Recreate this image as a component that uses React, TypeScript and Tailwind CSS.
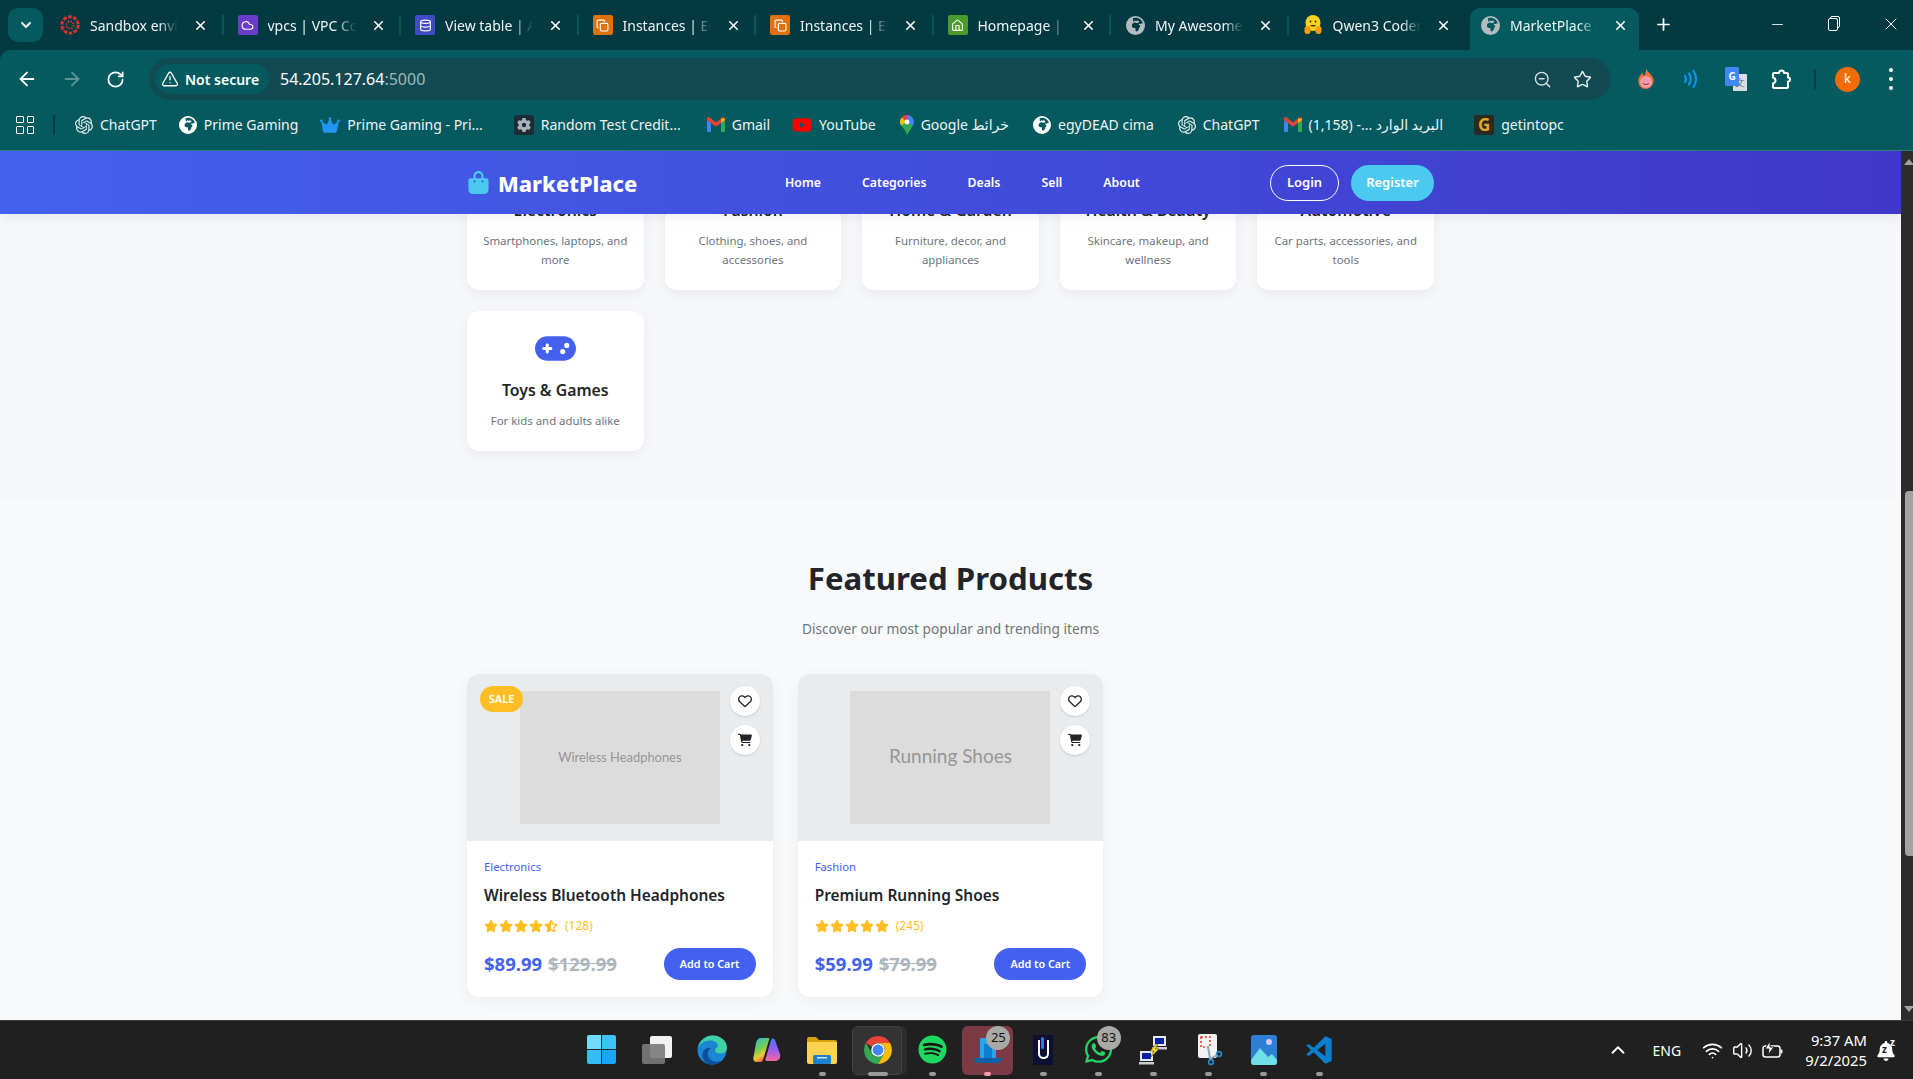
import React from 'react';
import { ArrowLeft, ArrowRight, RotateCw, TriangleAlert, ZoomOut, Star, X, Plus, Minus, ChevronDown, ChevronUp, Cloud, Database, Copy, Wifi, Volume2, Home } from 'lucide-react';
import { FaBagShopping, FaBell, FaCartShopping, FaCrown, FaEarthAfrica, FaGamepad, FaGear, FaHeartPulse, FaCar, FaLaptop, FaRegHeart, FaShirt, FaSpotify, FaStar, FaStarHalfStroke, FaWhatsapp, FaCouch, FaYoutube } from 'react-icons/fa6';
import { SiOpenai } from 'react-icons/si';

const tile = 'w-5 h-5 rounded-[2px] flex items-center justify-center shrink-0';

const SandboxIcon = () => (
  <svg width="20" height="20" viewBox="0 0 20 20" className="shrink-0">
    <circle cx="10" cy="10" r="8.2" fill="none" stroke="#d9352b" strokeWidth="3" strokeDasharray="3.6 1.6" />
    <circle cx="10" cy="10" r="3.6" fill="none" stroke="#d9352b" strokeWidth="1.6" strokeDasharray="1.6 1.2" />
  </svg>
);

const HuggingIcon = () => (
  <svg width="20" height="22" viewBox="0 0 20 22" className="shrink-0">
    <ellipse cx="10" cy="9" rx="7.5" ry="8" fill="#ffd21e" />
    <rect x="1.5" y="12" width="6" height="8" rx="3" fill="#ff9d0b" />
    <rect x="12.5" y="12" width="6" height="8" rx="3" fill="#ff9d0b" />
    <circle cx="7.5" cy="7.5" r="1" fill="#32343d" />
    <circle cx="12.5" cy="7.5" r="1" fill="#32343d" />
    <path d="M7 11c1.5 2 4.5 2 6 0" fill="#32343d" />
  </svg>
);

const GlobeGrey = () => <FaEarthAfrica size={19} className="text-[#b4bcc0] shrink-0 ml-px" />;

const tabs: { title: string; icon: React.ReactNode; active?: boolean }[] = [
  { title: 'Sandbox environment', icon: <SandboxIcon /> },
  { title: 'vpcs | VPC Console', icon: <div className={`${tile} bg-[#6a3cc9]`}><Cloud size={13} className="text-white" /></div> },
  { title: 'View table | Aurora', icon: <div className={`${tile} bg-[#3f4bc9]`}><Database size={13} className="text-white" /></div> },
  { title: 'Instances | EC2', icon: <div className={`${tile} bg-[#e0710f]`}><Copy size={13} className="text-white" /></div> },
  { title: 'Instances | EC2', icon: <div className={`${tile} bg-[#e0710f]`}><Copy size={13} className="text-white" /></div> },
  { title: 'Homepage | Supabase', icon: <div className={`${tile} bg-[#4b9a2c]`}><Home size={13} className="text-white" /></div> },
  { title: 'My Awesome App', icon: <GlobeGrey /> },
  { title: 'Qwen3 Coder Next', icon: <HuggingIcon /> },
  { title: 'MarketPlace - Home', icon: <GlobeGrey />, active: true },
];

const GmailIcon = () => (
  <svg width="18" height="15" viewBox="0 0 18 15" className="shrink-0">
    <path d="M0 3v10.5A1.5 1.5 0 0 0 1.5 15H4V6z" fill="#4285f4" />
    <path d="M14 6v9h2.5A1.5 1.5 0 0 0 18 13.5V3z" fill="#34a853" />
    <path d="M0 1.8C0 .4 1.6-.4 2.7.5L9 5.5 15.3.5C16.4-.4 18 .4 18 1.8V3l-4 3-5 3.7L4 6 0 3z" fill="#ea4335" />
    <path d="M14 1.5 18 1.8V3l-4 3z" fill="#fbbc04" />
  </svg>
);

const MapsIcon = () => (
  <svg width="14" height="20" viewBox="0 0 14 20" className="shrink-0">
    <path d="M7 0a7 7 0 0 1 7 7c0 1.5-.5 2.7-1.3 3.8L7 8z" fill="#4285f4" />
    <path d="M7 0a7 7 0 0 0-5.3 2.4L7 7z" fill="#ea4335" />
    <path d="M1.7 2.4A7 7 0 0 0 1.3 10.8L7 7z" fill="#fbbc04" />
    <path d="M1.3 10.8C3 13.2 5.8 15.5 7 20l5.7-9.2L7 7z" fill="#34a853" />
    <circle cx="7" cy="7" r="2.4" fill="#fff" />
  </svg>
);

const bookmarks: { label: string; icon: React.ReactNode; rtl?: boolean; ml: string }[] = [
  { label: 'ChatGPT', icon: <SiOpenai size={18} className="text-[#e6eeee]" />, ml: 'ml-0' },
  { label: 'Prime Gaming', icon: <FaEarthAfrica size={18} className="text-white" />, ml: 'ml-[22px]' },
  { label: 'Prime Gaming - Pri...', icon: <FaCrown size={20} className="text-[#2196f3]" />, ml: 'ml-[22px]' },
  { label: 'Random Test Credit...', icon: <div className="w-5 h-5 rounded-[3px] bg-[#1d2b36] flex items-center justify-center"><FaGear size={14} className="text-[#aab4bb]" /></div>, ml: 'ml-[31px]' },
  { label: 'Gmail', icon: <GmailIcon />, ml: 'ml-[26px]' },
  { label: 'YouTube', icon: <div className="w-5 h-[18px] flex items-center justify-center"><FaYoutube size={20} className="text-[#f00]" /></div>, ml: 'ml-[22px]' },
  { label: 'خرائط Google', icon: <MapsIcon />, rtl: true, ml: 'ml-[24px]' },
  { label: 'egyDEAD cima', icon: <FaEarthAfrica size={18} className="text-white" />, ml: 'ml-[24px]' },
  { label: 'ChatGPT', icon: <SiOpenai size={18} className="text-[#e6eeee]" />, ml: 'ml-[24px]' },
  { label: 'البريد الوارد ...- (1,158)', icon: <GmailIcon />, rtl: true, ml: 'ml-[24px]' },
  { label: 'getintopc', icon: <div className="w-5 h-5 rounded-[2px] bg-[#2a2a22] flex items-center justify-center text-[#e3a81c] text-[17px] font-bold leading-none">G</div>, ml: 'ml-[31px]' },
];

const categories = [
  { title: 'Electronics', desc: 'Smartphones, laptops, and more', icon: <FaLaptop size={36} /> },
  { title: 'Fashion', desc: 'Clothing, shoes, and accessories', icon: <FaShirt size={36} /> },
  { title: 'Home & Garden', desc: 'Furniture, decor, and appliances', icon: <FaCouch size={36} /> },
  { title: 'Health & Beauty', desc: 'Skincare, makeup, and wellness', icon: <FaHeartPulse size={36} /> },
  { title: 'Automotive', desc: 'Car parts, accessories, and tools', icon: <FaCar size={36} /> },
  { title: 'Toys & Games', desc: 'For kids and adults alike', icon: <FaGamepad size={41} /> },
];

const products = [
  { cat: 'Electronics', name: 'Wireless Bluetooth Headphones', price: '$89.99', old: '$129.99', count: '(128)', half: true, sale: true, ph: 'Wireless Headphones', phClass: 'text-[12.9px]' },
  { cat: 'Fashion', name: 'Premium Running Shoes', price: '$59.99', old: '$79.99', count: '(245)', half: false, sale: false, ph: 'Running Shoes', phClass: 'text-[19px] pb-[3px]' },
];

function BrowserChrome() {
  return (
    <div className="bg-[#033a42] text-white shrink-0">
      {/* tab strip */}
      <div className="h-[50px] flex items-start relative">
        <div className="w-[35px] h-[34px] mt-2 ml-2 rounded-[10px] bg-[#055a60] flex items-center justify-center shrink-0">
          <ChevronDown size={16} strokeWidth={3} />
        </div>
        <div className="flex ml-[3px] h-full">
          {tabs.map((t, i) => (
            <div key={i} className={t.active
              ? 'w-[169px] ml-[4px] mt-[8px] h-[42px] pb-[8px] bg-[#045a5f] rounded-t-[10px] flex items-center pl-[10px] relative shrink-0'
              : 'w-[177.5px] h-full flex items-center pl-[14px] relative shrink-0'}>
              {t.icon}
              <div className="ml-[10px] w-[88px] overflow-hidden whitespace-nowrap text-[14px] text-[#eef4f4] [mask-image:linear-gradient(to_right,black_78%,transparent)]">{t.title}</div>
              <X size={15} strokeWidth={2.5} className="ml-[15px] text-white" />
              {!t.active && i < 7 && <div className="absolute right-0 top-[15px] h-[20px] w-[2px] bg-[#07555c]" />}
            </div>
          ))}
          <Plus size={19} strokeWidth={2.2} className="ml-[15px] mt-[15px]" />
        </div>
        <Minus size={17} strokeWidth={1.2} className="absolute left-[1769px] top-[16px]" />
        <div className="absolute left-[1830px] top-[16px] w-[10px] h-[12px] border border-white rounded-[2px]" />
        <div className="absolute left-[1828px] top-[18px] w-[10px] h-[13px] border border-white bg-[#033a42] rounded-[2px]" />
        <X size={20} strokeWidth={1.2} className="absolute left-[1881px] top-[14px]" />
      </div>
      {/* toolbar */}
      <div className="h-[50px] bg-[#045a5f] rounded-tl-[10px] flex items-start">
        <div className="flex items-center h-[42px] mt-[8px] pl-[16px] gap-[23px]">
          <ArrowLeft size={22} strokeWidth={2} />
          <ArrowRight size={22} strokeWidth={2} className="text-[#5e9497]" />
          <RotateCw size={19} strokeWidth={2.2} />
        </div>
        <div className="ml-[24px] mt-[8px] w-[1462px] h-[42px] rounded-full bg-[#114a52] flex items-center pl-[6px] pr-[19px]">
          <div className="h-[30px] w-[114px] rounded-full bg-[#045a5f] flex items-center pl-[6px] gap-[6px] text-[14px] font-semibold whitespace-nowrap">
            <TriangleAlert size={18} strokeWidth={1.8} />
            Not secure
          </div>
          <span className="ml-[11px] text-[16px]">54.205.127.64<span className="text-[#9fb8ba]">:5000</span></span>
          <ZoomOut size={19} strokeWidth={1.8} className="ml-auto text-[#d5e0e0]" />
          <Star size={19} strokeWidth={1.8} className="ml-[21px] text-[#e6eeee]" />
        </div>
        <div className="flex items-center h-[42px] mt-[8px] ml-[25px]">
          <svg width="20" height="26" viewBox="0 0 20 24">
            <path d="M10 1c1 4 6 6 7.5 11 1 4-2.5 10-7.5 10S1.5 18 2.5 12C3 9.5 5 8 5.5 6 7 7 7.5 8 8 9c1.500-2 2.500-5 2-8z" fill="#f2703a" />
            <circle cx="10" cy="15" r="6" fill="#f59ca8" />
            <path d="M7 16c1.5 2 4.5 2 6 0" stroke="#7a2a2a" strokeWidth="1" fill="none" />
          </svg>
          <svg width="20" height="24" viewBox="0 0 20 24" fill="none" stroke="#0a94f0" strokeWidth="2.2" strokeLinecap="round" className="ml-[24px]">
            <path d="M5 9c1.2 2 1.2 4 0 6" />
            <path d="M9 6.5c2.2 3.4 2.2 7.6 0 11" />
            <path d="M13.5 4c3.2 5 3.2 11 0 16" />
          </svg>
          <div className="relative w-[22px] h-[24px] ml-[25px]">
            <div className="absolute right-0 bottom-0 w-[14px] h-[17px] bg-[#d9dfe0] rounded-[1px] text-[#666] text-[10px] text-center leading-[17px]">文</div>
            <div className="absolute left-0 top-0 w-[14px] h-[19px] bg-[#4285f4] rounded-[1px] text-white text-[10px] font-bold text-center leading-[18px]">G</div>
          </div>
          <svg width="22" height="24" viewBox="0 0 22 24" fill="none" stroke="#fff" strokeWidth="2" strokeLinejoin="round" className="ml-[23px]">
            <path d="M4 6h5a2.5 2.5 0 0 1 5 0h3a1 1 0 0 1 1 1v3.5a2 2 0 1 1 0 4V20a1 1 0 0 1-1 1H4a1 1 0 0 1-1-1v-3.500c2-.5 2.500-2 2.500-3s-.5-2.500-2.500-3V7a1 1 0 0 1 1-1z" />
          </svg>
          <div className="w-[2px] h-[20px] bg-[#043f47] ml-[22px]" />
          <div className="w-[25px] h-[25px] rounded-full bg-[#f26c06] ml-[19px] flex items-center justify-center text-[13px]">k</div>
          <div className="ml-[29px] flex flex-col gap-[5px]">
            <div className="w-[4px] h-[4px] rounded-full bg-white" />
            <div className="w-[4px] h-[4px] rounded-full bg-white" />
            <div className="w-[4px] h-[4px] rounded-full bg-white" />
          </div>
        </div>
      </div>
      {/* bookmarks */}
      <div className="h-[51px] bg-[#045a5f] flex items-center pl-[16px] pb-[1px] border-b border-[#2c7f7c]">
        <div className="grid grid-cols-2 gap-[3px] w-[18px] shrink-0">
          {[0, 1, 2, 3].map(n => <div key={n} className="h-[7.5px] border-[1.5px] border-white rounded-[1px]" />)}
        </div>
        <div className="w-[2px] h-[20px] bg-[#043f47] ml-[19px] mr-[20px]" />
        <div className="flex items-center text-[14px] text-[#eef4f4] whitespace-nowrap">
          {bookmarks.map((b, i) => (
            <div key={i} className={`flex items-center gap-[7px] ${b.ml}`}>
              {b.icon}
              <span dir={b.rtl ? 'rtl' : undefined}>{b.label}</span>
            </div>
          ))}
        </div>
      </div>
    </div>
  );
}

function Navbar() {
  return (
    <div className="absolute top-0 left-0 right-0 h-[63px] z-10 bg-gradient-to-r from-[#4361ee] to-[#3f37c9] shadow-[0_4px_12px_rgba(0,0,0,0.06)]">
      <div className="w-[967px] mx-auto h-full flex items-center relative">
        <div className="flex items-center gap-[8px] w-[318px]">
          <FaBagShopping size={23} className="text-[#4cc9f0]" />
          <span className="text-[21.8px] font-extrabold text-white mt-[3px]">MarketPlace</span>
        </div>
        <div className="flex items-center gap-[41px] text-[12.3px] font-semibold text-white mt-[1px]">
          <span>Home</span>
          <span>Categories</span>
          <span>Deals</span>
          <span>Sell</span>
          <span>About</span>
        </div>
        <div className="ml-auto flex items-center gap-3 text-[13px] font-semibold text-white">
          <div className="h-[36px] w-[69px] rounded-full border border-white flex items-center justify-center">Login</div>
          <div className="h-[36px] w-[83px] rounded-full bg-[#4cc9f0] flex items-center justify-center">Register</div>
        </div>
      </div>
    </div>
  );
}

function CategoryCard({ title, desc, icon }: { title: string; desc: string; icon: React.ReactNode }) {
  return (
    <div className="bg-white rounded-[12px] shadow-[0_4px_12px_rgba(0,0,0,0.05)] px-[12px] pt-[24px] pb-[21px] flex flex-col items-center text-center">
      <div className="h-[26px] flex items-center justify-center text-[#4361ee]">{icon}</div>
      <div className="mt-[17px] text-[15.8px] leading-[24px] font-semibold text-[#212529]">{title}</div>
      <div className="mt-[9px] text-[11.4px] leading-[19px] text-[#6c757d]">{desc}</div>
    </div>
  );
}

function ProductCard({ p }: { p: (typeof products)[number] }) {
  return (
    <div className="bg-white rounded-[12px] overflow-hidden shadow-[0_4px_16px_rgba(0,0,0,0.05)]">
      <div className="h-[167px] bg-[#e9ecef] relative flex items-center justify-center">
        <div className={`w-[200px] h-[133px] bg-[#dcdcdc] flex items-center justify-center text-[#969696] font-['Lato',sans-serif] ${p.phClass}`}>{p.ph}</div>
        {p.sale && (
          <div className="absolute left-[13px] top-[12px] h-[26px] w-[43px] rounded-full bg-[#ffbe23] text-white text-[11px] font-semibold flex items-center justify-center">SALE</div>
        )}
        <div className="absolute right-[13px] top-[12px] flex flex-col gap-[9px]">
          <div className="w-[30px] h-[30px] rounded-full bg-white shadow-sm flex items-center justify-center text-[#212529]"><FaRegHeart size={14} /></div>
          <div className="w-[30px] h-[30px] rounded-full bg-white shadow-sm flex items-center justify-center text-[#212529]"><FaCartShopping size={14} /></div>
        </div>
      </div>
      <div className="px-[17px] pt-[17px] pb-[17px]">
        <div className="text-[11.3px] leading-[18px] text-[#4361ee]">{p.cat}</div>
        <div className="mt-[7px] text-[15.45px] leading-[24px] font-semibold text-[#212529]">{p.name}</div>
        <div className="mt-[11px] flex items-center text-[#ffbe23] h-[16px]">
          <div className="flex gap-[1px]">
            {[0, 1, 2, 3].map(n => <FaStar key={n} size={14} />)}
            {p.half ? <FaStarHalfStroke size={14} /> : <FaStar size={14} />}
          </div>
          <span className="ml-[7px] text-[12px]">{p.count}</span>
        </div>
        <div className="mt-[14px] flex items-center justify-between">
          <div className="flex items-center gap-[6px] text-[18.5px] font-bold">
            <span className="text-[#4361ee]">{p.price}</span>
            <span className="text-[#adb5bd] line-through">{p.old}</span>
          </div>
          <div className="h-[32px] w-[92px] rounded-full bg-[#4361ee] text-white text-[10.8px] font-semibold flex items-center justify-center">Add to Cart</div>
        </div>
      </div>
    </div>
  );
}

function Page() {
  return (
    <div className="flex-1 flex min-h-0">
      <div className="flex-1 relative overflow-hidden bg-[#f8f9fa]">
        <Navbar />
        <div className="-mt-[20px] bg-[#f5f7fb] pb-[47px]">
          <div className="w-[967px] mx-auto grid grid-cols-5 gap-x-[21px] gap-y-[21px]">
            {categories.map(c => <CategoryCard key={c.title} {...c} />)}
          </div>
        </div>
        <div className="pt-[57px]">
          <h2 className="text-center text-[31.2px] leading-[46px] font-bold text-[#212529]">Featured Products</h2>
          <p className="mt-[17px] text-center text-[13.7px] leading-[22px] text-[#6c757d]">Discover our most popular and trending items</p>
          <div className="w-[967px] mx-auto mt-[34px] grid grid-cols-3 gap-x-[25px]">
            {products.map(p => <ProductCard key={p.name} p={p} />)}
          </div>
        </div>
      </div>
      <div className="w-[12px] bg-[#2c2c2c] flex flex-col items-center relative shrink-0">
        <div className="absolute left-[4px] top-[340px] w-[8px] h-[365px] bg-[#a3a3a3] rounded-l-[4px]" />
        <div className="mt-[8px] ml-[4px] w-0 h-0 border-x-[5px] border-x-transparent border-b-[6px] border-b-[#a3a3a3]" />
        <div className="mt-auto mb-[8px] ml-[4px] w-0 h-0 border-x-[5px] border-x-transparent border-t-[6px] border-t-[#a3a3a3]" />
      </div>
    </div>
  );
}

const ChromeLogo = () => (
  <svg width="30" height="30" viewBox="0 0 30 30">
    <path d="M15 1a14 14 0 0 1 12.1 7H15a7 7 0 0 0-6.1 3.5L2.9 8A14 14 0 0 1 15 1z" fill="#ea4335" />
    <path d="M27.1 8A14 14 0 0 1 15 29l6-10.5A7 7 0 0 0 21 11.5 7 7 0 0 0 15 8z" fill="#fbbc04" />
    <path d="M2.9 8 8.9 18.5A7 7 0 0 0 15 22l6-3.5L15 29A14 14 0 0 1 2.9 8z" fill="#34a853" />
    <circle cx="15" cy="15" r="6.8" fill="#fff" />
    <circle cx="15" cy="15" r="5.4" fill="#4285f4" />
  </svg>
);

const taskIcons: { icon: React.ReactNode; dot?: string; bg?: string; badge?: string }[] = [
  { icon: (
    <div className="grid grid-cols-2 gap-[1px] w-[29px] h-[29px]">
      <div className="bg-[#6fdcfb] rounded-tl-[2px]" /><div className="bg-[#3cc4f8] rounded-tr-[2px]" />
      <div className="bg-[#35bdf7] rounded-bl-[2px]" /><div className="bg-[#1aa5f6] rounded-br-[2px]" />
    </div>
  ) },
  { icon: (
    <div className="relative w-[30px] h-[28px]">
      <div className="absolute right-0 top-0 w-[22px] h-[22px] bg-[#f1f1f1] rounded-[2px]" />
      <div className="absolute left-0 bottom-0 w-[23px] h-[20px] bg-[#7a7a7a]/90 rounded-[2px]" />
    </div>
  ) },
  { icon: (
    <svg width="30" height="30" viewBox="0 0 30 30">
      <circle cx="15" cy="15" r="14.5" fill="#1b87d3" />
      <path d="M1 14C2 5 10 .5 16 .5c8 0 14 6 14 12 0 4-3 6-7 6-3 0-5-1.5-5-3 0-3 3-2.5 3-5 0-3-4-5-8-5C7 5.5 2 9 1 14z" fill="#3fd0a5" />
      <path d="M13 29.5C7 28 4 22 6 17c1-3 5-5 8-4-3 2-4 6-2 10 2 3 7 5 12 3-3 3-7 4-11 3.5z" fill="#0c4f9f" />
    </svg>
  ) },
  { icon: (
    <svg width="30" height="28" viewBox="0 0 30 28">
      <defs>
        <linearGradient id="copL" x1="0" y1="0" x2="0.4" y2="1">
          <stop offset="0" stopColor="#1fb6e8" /><stop offset="0.55" stopColor="#7fd04a" /><stop offset="0.8" stopColor="#f2c92e" /><stop offset="1" stopColor="#ef6a4b" />
        </linearGradient>
        <linearGradient id="copR" x1="0.6" y1="0" x2="0.6" y2="1">
          <stop offset="0" stopColor="#3f7df0" /><stop offset="0.5" stopColor="#9a5cf0" /><stop offset="1" stopColor="#ef6a9b" />
        </linearGradient>
      </defs>
      <path d="M9 2h7c1 0 1.5 .5 1 2l-6 20c-.5 1.5-1.5 2-3 2H5c-3 0-4-2-3.500-5L4 7c.5-3 2.500-5 5-5z" fill="url(#copL)" />
      <path d="M19 4c1-2 3-2 4 0l5 14c1 4-1 7-5 7h-8c-1.500 0-2-1-1.500-2z" fill="url(#copR)" />
    </svg>
  ) },
  { dot: 'w-[7px]', icon: (
    <svg width="30" height="28" viewBox="0 0 30 28">
      <path d="M0 3a2 2 0 0 1 2-2h7l3 3h16a2 2 0 0 1 2 2v4H0z" fill="#d8a110" />
      <path d="M0 6h30v20a2 2 0 0 1-2 2H2a2 2 0 0 1-2-2z" fill="#fdd44f" />
      <rect x="6" y="19" width="18" height="9" rx="1.5" fill="#1a82d0" />
      <rect x="10" y="21" width="10" height="1.5" fill="#cfe8fa" />
    </svg>
  ) },
  { dot: 'w-[20px]', bg: 'bg-[#333333] border border-[#444]', icon: <ChromeLogo /> },
  { dot: 'w-[7px]', icon: <div className="w-[26px] h-[26px] rounded-full bg-[#191414] flex items-center justify-center"><FaSpotify size={29} className="text-[#1ed760] shrink-0" /></div> },
  { dot: 'w-[7px]', bg: 'bg-[#7c3a44]', badge: '25', icon: (
    <svg width="30" height="28" viewBox="0 0 30 28">
      <rect x="7" y="2" width="16" height="20" rx="1" fill="#2aa5e8" />
      <path d="M0 22h30l-4 5H4z" fill="#0b5fa5" />
      <rect x="11" y="8" width="8" height="14" fill="#0d7fcf" />
    </svg>
  ) },
  { dot: 'w-[7px]', icon: (
    <div className="w-[20px] h-[30px] bg-[#0d1030] flex items-center justify-center">
      <div className="w-[11px] h-[19px] border-[2.5px] border-t-0 border-white rounded-b-full relative">
        <div className="absolute left-[1px] -top-[3px] w-[3px] h-[12px] bg-[#2a7de1] rounded-full" />
      </div>
    </div>
  ) },
  { dot: 'w-[7px]', badge: '83', icon: <FaWhatsapp size={31} className="text-[#25d366]" /> },
  { dot: 'w-[7px]', icon: (
    <svg width="30" height="30" viewBox="0 0 30 30">
      <rect x="15" y="1" width="13" height="10" fill="#e6e9ef" /><rect x="17" y="3" width="9" height="6" fill="#0a1fa8" />
      <rect x="14" y="12" width="15" height="2.5" fill="#c9ccd2" />
      <rect x="2" y="16" width="13" height="10" fill="#e6e9ef" /><rect x="4" y="18" width="9" height="6" fill="#0a1fa8" />
      <rect x="1" y="27" width="15" height="2.5" fill="#c9ccd2" />
      <path d="M18 9l-6 7h4l-4 7 9-9h-4l3-5z" fill="#ffe600" stroke="#333" strokeWidth="0.5" />
    </svg>
  ) },
  { dot: 'w-[7px]', icon: (
    <svg width="30" height="32" viewBox="0 0 30 32">
      <rect x="4" y="0" width="19" height="24" rx="2" fill="#f2f2f2" />
      <rect x="7" y="3" width="9" height="10" fill="none" stroke="#d84a2a" strokeWidth="1.6" strokeDasharray="2 2" />
      <path d="M14 12l2 13" stroke="#8fa7b8" strokeWidth="2" />
      <circle cx="17" cy="28" r="2.4" fill="none" stroke="#2b88c8" strokeWidth="1.6" />
      <circle cx="25" cy="20" r="2.4" fill="none" stroke="#2b88c8" strokeWidth="1.6" />
      <path d="M16 25l7-4" stroke="#8fa7b8" strokeWidth="2" />
    </svg>
  ) },
  { dot: 'w-[7px]', icon: (
    <svg width="26" height="30" viewBox="0 0 26 30">
      <rect width="26" height="30" rx="3" fill="#2f7fd4" />
      <circle cx="18" cy="7" r="3" fill="#d9c6f5" />
      <path d="M0 25l9-12 8 9 4-3 5 6v2a3 3 0 0 1-3 3H3a3 3 0 0 1-3-3z" fill="#6fe0e8" />
    </svg>
  ) },
  { dot: 'w-[7px]', icon: (
    <svg width="30" height="30" viewBox="0 0 24 26">
      <path fillRule="evenodd" d="M17.5 1 7.5 11 3 7.7 1 9l4 4-4 4 2 1.3L7.5 15l10 10 5.5-2.5V3.500zM17.5 7.5v11L10.500 13z" fill="#0a7fd0" />
    </svg>
  ) },
];

function Taskbar() {
  return (
    <div className="h-[59px] shrink-0 bg-[#202020] border-t border-[#3a3a3a] flex items-center text-white relative">
      <div className="flex pl-[574px] h-full">
        {taskIcons.map((t, i) => (
          <div key={i} className="w-[55.2px] h-full relative flex items-center justify-center pb-[1px]">
            {t.bg?.includes('333333') && <div className="absolute left-[6px] -right-[2px] top-[5px] bottom-[4px] rounded-[6px] bg-[#2c2c2c]" />}
            {t.bg && <div className={`absolute left-[2px] right-[3px] top-[5px] bottom-[4px] rounded-[6px] ${t.bg}`} />}
            <div className="relative">{t.icon}</div>
            {t.badge && (
              <div className="absolute left-[26px] top-[5px] w-[24px] h-[24px] rounded-full bg-[#a9a9a5] text-[#111] text-[13px] flex items-center justify-center">{t.badge}</div>
            )}
            {t.dot && <div className={`absolute bottom-[3px] h-[4px] rounded-full ${t.bg?.includes('7c3a44') ? 'bg-[#f59aa8]' : 'bg-[#9a9a9a]'} ${t.dot}`} />}
          </div>
        ))}
      </div>
      <div className="ml-auto flex items-center pr-[17px] h-full">
        <ChevronUp size={22} strokeWidth={2} />
        <span className="ml-[24px] text-[14px]">ENG</span>
        <Wifi size={21} strokeWidth={2} className="ml-[21px]" />
        <Volume2 size={21} strokeWidth={1.6} className="ml-[9px]" />
        <svg width="22" height="20" viewBox="0 0 22 20" fill="none" stroke="#fff" strokeWidth="1.5" className="ml-[9px]">
          <rect x="1" y="6" width="17" height="11" rx="2.5" />
          <rect x="18.5" y="9.5" width="2" height="4" rx="1" fill="#fff" stroke="none" />
          <path d="M8 1 3 9h4l-1 6 6-8H8z" fill="#fff" stroke="#202020" strokeWidth="1" />
        </svg>
        <div className="ml-[21px] text-right text-[14.8px] leading-[20px]">
          <div>9:37 AM</div>
          <div>9/2/2025</div>
        </div>
        <div className="relative ml-[9px] w-[20px] h-[22px]">
          <FaBell size={20} className="absolute left-0 top-[2px]" />
          <span className="absolute left-[6px] top-[3px] text-[10px] leading-[14px] font-bold text-[#202020]">z</span>
          <span className="absolute left-[14px] -top-[3px] text-[10px] leading-[12px] font-bold">z</span>
        </div>
      </div>
    </div>
  );
}

export default function App() {
  return (
    <div className="w-[1913px] h-[1079px] overflow-hidden flex flex-col font-['Noto_Sans','DejaVu_Sans',sans-serif]">
      <BrowserChrome />
      <Page />
      <Taskbar />
    </div>
  );
}
